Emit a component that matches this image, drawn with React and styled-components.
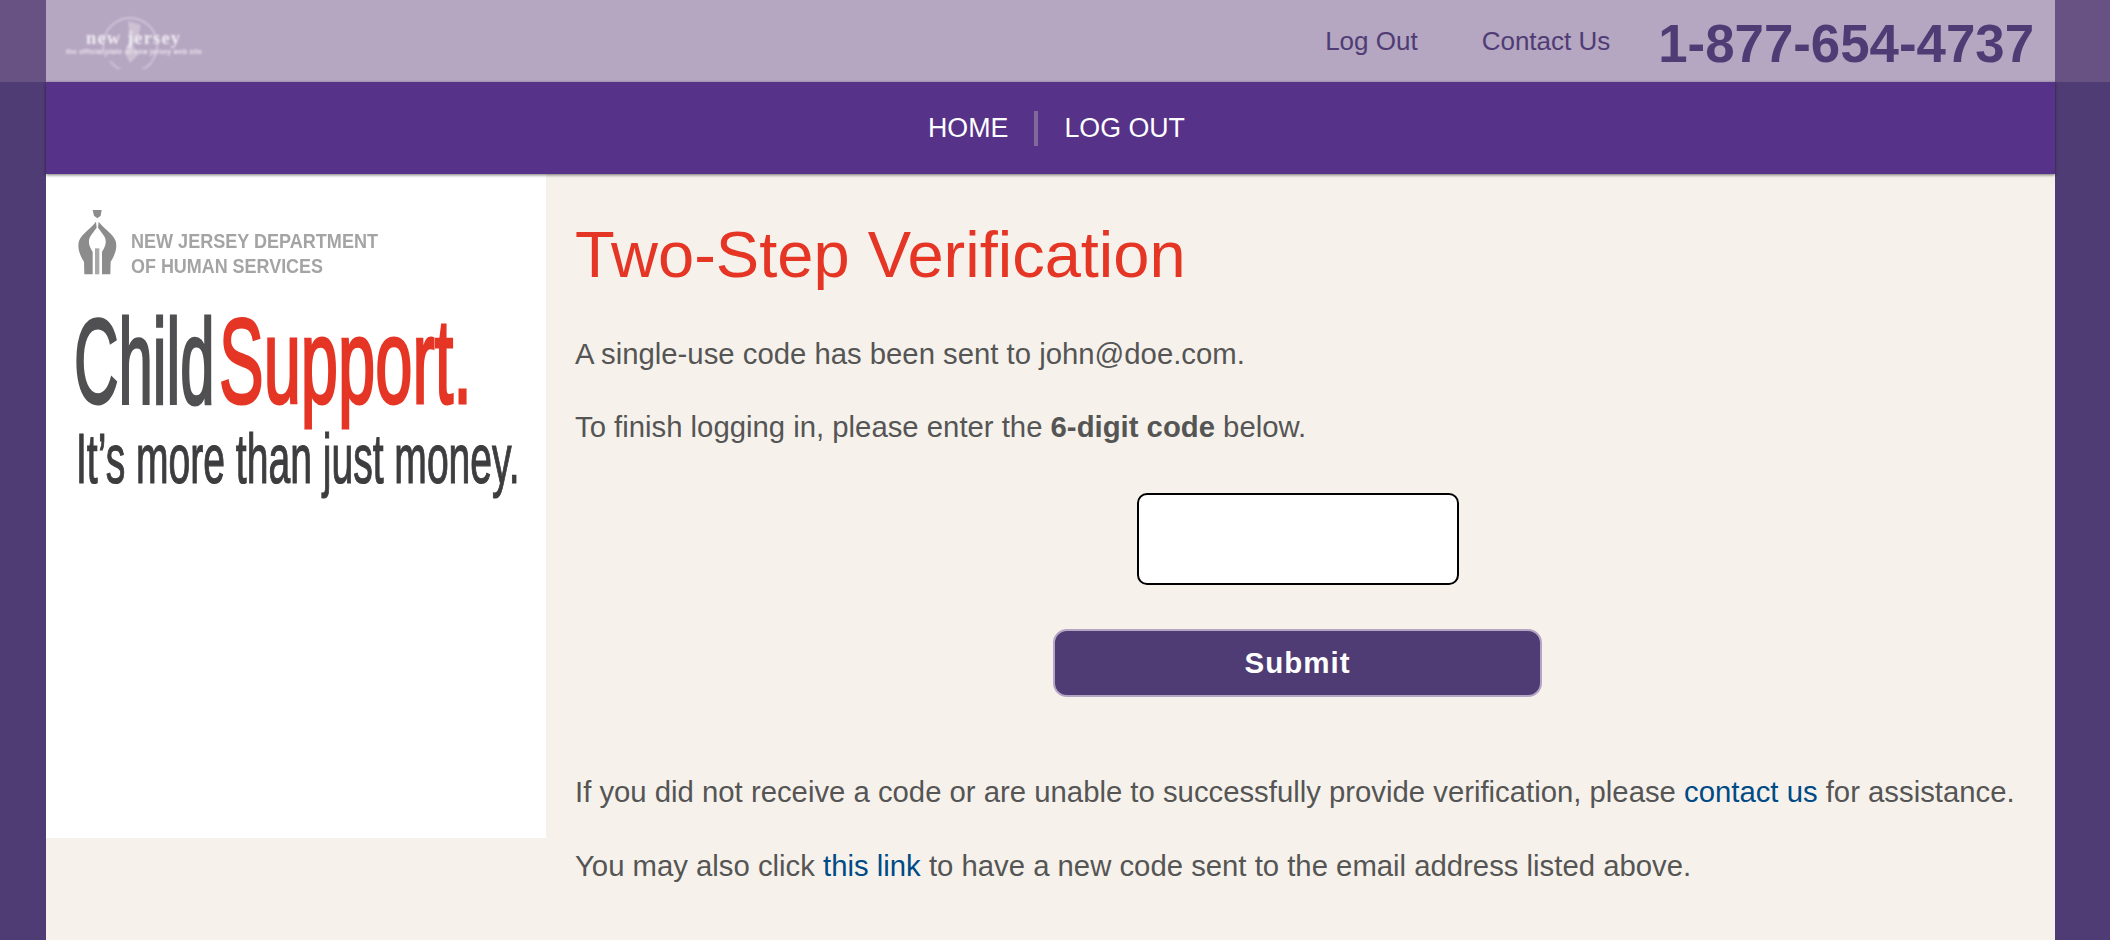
import React from "react";
import styled, { createGlobalStyle } from "styled-components";

const Global = createGlobalStyle`
  html, body { margin: 0; padding: 0; }
  body { background: #4f3c74; font-family: "Liberation Sans", Arial, sans-serif; color: #555; overflow: hidden; }
`;

const TopBand = styled.div`
  background: #675283;
  padding: 0 55px 0 46px;
`;
const TopBar = styled.header`
  height: 82px;
  background: #b5a6c2;
  display: flex;
  align-items: center;
  justify-content: space-between;
  padding: 0 21px 0 20px;
`;
const StateLogo = styled.svg`
  width: 137px;
  height: 56px;
  filter: blur(0.9px);
`;
const TopRight = styled.div`
  display: flex;
  align-items: center;
`;
const TopLink = styled.a`
  font-size: 26px;
  color: #4f3c74;
  margin-right: ${(p) => p.$gap}px;
`;
const Phone = styled.span`
  font-size: 52.8px;
  font-weight: 700;
  color: #4f3c74;
  margin-top: 5px;
`;
const Frame = styled.div`
  padding: 0 55px 0 46px;
`;
const Nav = styled.nav`
  position: relative;
  height: 92px;
  background: #563289;
  box-shadow: 0 1px 3px rgba(0, 0, 0, 0.55);
  display: flex;
  align-items: center;
  justify-content: center;
  font-size: 26.8px;
  color: #fff;
  padding-left: 12px;
`;
const NavItem = styled.a`
  color: #fff;
`;
const NavSep = styled.span`
  width: 4px;
  height: 35px;
  margin: 0 26px;
  background: #7f6a9b;
`;
const Content = styled.div`
  display: flex;
  align-items: flex-start;
  background: #f6f2eb;
  height: 766px;
`;
const Sidebar = styled.aside`
  width: 500px;
  height: 664px;
  background: #fff;
  flex: none;
`;
const BrandLogo = styled.svg`
  display: block;
  width: 500px;
  height: 340px;
  filter: blur(0.6px);
`;
const Main = styled.main`
  flex: 1;
  padding: 0 35px 0 29px;
`;
const Title = styled.h1`
  margin: 41px 0 0;
  font-size: 65px;
  line-height: 80px;
  font-weight: 400;
  color: #e53525;
`;
const Para = styled.p`
  margin: ${(p) => p.$top}px 0 0;
  font-size: 29.3px;
  line-height: 32px;
  color: #555;
  white-space: nowrap;
`;
const Link = styled.a`
  color: #004a86;
`;
const Form = styled.form`
  display: flex;
  flex-direction: column;
  align-items: center;
  margin-top: 50px;
`;
const CodeInput = styled.input`
  box-sizing: border-box;
  width: 322px;
  height: 92px;
  background: #fff;
  border: 2px solid #000;
  border-radius: 10px;
`;
const Submit = styled.button`
  box-sizing: border-box;
  width: 489px;
  height: 68px;
  margin-top: 44px;
  background: #4f3c74;
  border: 2px solid #b5a5c4;
  border-radius: 14px;
  color: #fff;
  font-family: "Liberation Sans", Arial, sans-serif;
  font-size: 29.5px;
  font-weight: 700;
  letter-spacing: 1px;
`;

export default function App() {
  return (
    <>
      <Global />
      <TopBand>
        <TopBar>
          <StateLogo viewBox="0 0 137 56" aria-label="new jersey">
            <path d="M40 44 A27 27 0 1 1 86 48 M86 49 A27 27 0 0 1 44 48" fill="none" stroke="#cfc5d8" strokeWidth="2" />
            <path d="M62 8 L75 12 L72 24 L67 32 L72 42 L64 50 L59 40 L64 26 Z" fill="#cdc2d4" />
            <text x="20" y="31" fontFamily="Liberation Serif, serif" fontWeight="700" fontSize="18.500" textLength="94" lengthAdjust="spacing" fill="#f1edf3">new jersey</text>
            <text x="0" y="41" fontFamily="Liberation Sans, sans-serif" fontWeight="700" fontSize="6.600" textLength="136" lengthAdjust="spacing" fill="#eee9f1">the official state of new jersey web site</text>
          </StateLogo>
          <TopRight>
            <TopLink $gap={64}>Log Out</TopLink>
            <TopLink $gap={48}>Contact Us</TopLink>
            <Phone>1-877-654-4737</Phone>
          </TopRight>
        </TopBar>
      </TopBand>
      <Frame>
        <Nav>
          <NavItem>HOME</NavItem>
          <NavSep />
          <NavItem>LOG OUT</NavItem>
        </Nav>
        <Content>
          <Sidebar>
            <BrandLogo viewBox="0 0 500 340" aria-label="New Jersey Department of Human Services - Child Support">
              <g transform="translate(24 31) scale(0.3333)" fill="#8c8c8c">
                <path d="M68 15 H95 L92 32 L82 40 L72 32 Z" />
                <path d="M78 50 C62 72 36 84 27 108 C21 130 30 152 42 170 L43 208 L68 208 L68 140 C60 128 52 112 60 96 C66 86 74 76 80 68 Z" />
                <path d="M86 50 C102 72 128 84 137 108 C143 130 134 152 122 170 L121 208 L96 208 L96 140 C104 128 112 112 104 96 C98 86 90 76 84 68 Z" />
                <rect x="75" y="130" width="13" height="78" fill="#a8a8a8" />
              </g>
              <g fontFamily="Liberation Sans, sans-serif" fontWeight="700" fontSize="21" fill="#a4a4a4">
                <text x="85" y="74" textLength="247" lengthAdjust="spacingAndGlyphs">NEW JERSEY DEPARTMENT</text>
                <text x="85" y="99" textLength="192" lengthAdjust="spacingAndGlyphs">OF HUMAN SERVICES</text>
              </g>
              <g fontFamily="Liberation Sans, sans-serif" fontSize="121">
                <text transform="translate(28 229) scale(0.51 1)" fill="#505052" stroke="#505052" strokeWidth="2.400" vectorEffect="non-scaling-stroke">Child</text>
                <text transform="translate(173 229) scale(0.553 1)" fill="#e53525" stroke="#e53525" strokeWidth="2.400" vectorEffect="non-scaling-stroke">Support.</text>
              </g>
              <text transform="translate(30 309) scale(0.558 1)" fontFamily="Liberation Sans, sans-serif" fontSize="70" fill="#3d3d3f" stroke="#3d3d3f" strokeWidth="1" vectorEffect="non-scaling-stroke">It’s more than just money.</text>
            </BrandLogo>
          </Sidebar>
          <Main>
            <Title>Two-Step Verification</Title>
            <Para $top={43}>A single-use code has been sent to john@doe.com.</Para>
            <Para $top={41}>To finish logging in, please enter the <b>6-digit code</b> below.</Para>
            <Form>
              <CodeInput />
              <Submit type="button">Submit</Submit>
            </Form>
            <Para $top={79}>If you did not receive a code or are unable to successfully provide verification, please <Link>contact us</Link> for assistance.</Para>
            <Para $top={42}>You may also click <Link>this link</Link> to have a new code sent to the email address listed above.</Para>
          </Main>
        </Content>
      </Frame>
    </>
  );
}
